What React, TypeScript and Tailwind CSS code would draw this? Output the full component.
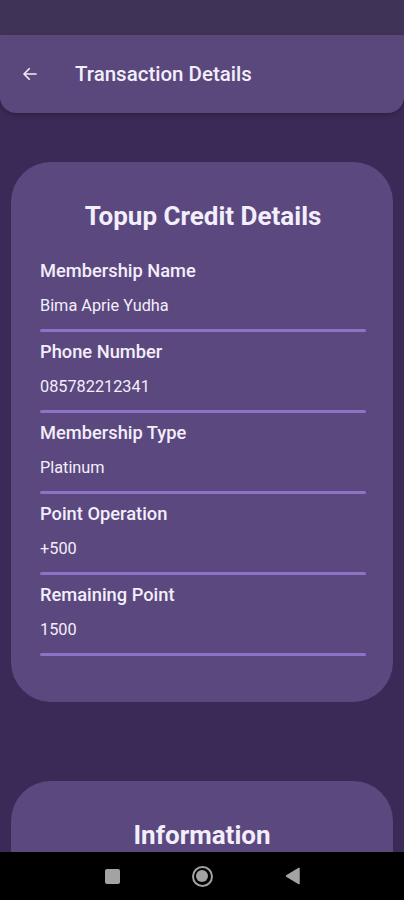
const fields = [
  { label: "Membership Name", value: "Bima Aprie Yudha" },
  { label: "Phone Number", value: "085782212341" },
  { label: "Membership Type", value: "Platinum" },
  { label: "Point Operation", value: "+500" },
  { label: "Remaining Point", value: "1500" },
];

export default function App() {
  return (
    <div
      className="relative flex h-[900px] w-[404px] flex-col overflow-hidden bg-[#3b2a57] text-[#f3eefb]"
      style={{ fontFamily: "Roboto, 'Noto Sans', sans-serif" }}
    >
      {/* status bar */}
      <div className="h-[35px] shrink-0 bg-[#3f3458]" />

      {/* app bar */}
      <header className="flex h-[78px] shrink-0 items-center rounded-b-[16px] bg-[#5a477c] shadow-[0_2px_4px_rgba(0,0,0,0.25)]">
        <svg
          className="ml-[21px] h-[18px] w-[18px]"
          viewBox="0 0 24 24"
          fill="none"
          stroke="currentColor"
          strokeWidth="2.2"
          strokeLinecap="round"
          strokeLinejoin="round"
        >
          <path d="M20 12H5" />
          <path d="M11 5l-7 7 7 7" />
        </svg>
        <h1 className="ml-[36px] text-[20.5px] font-medium leading-[26px]">Transaction Details</h1>
      </header>

      <main className="flex flex-col px-[11px] pt-[49px]">
        <section className="flex flex-col rounded-[40px] bg-[#5b487e] pb-[46px] pl-[29px] pr-[27px] pt-[38px]">
          <h2 className="text-center text-[26px] font-bold leading-[32px]">Topup Credit Details</h2>
          <div className="mt-[27px] flex flex-col gap-[8px]">
            {fields.map((f) => (
              <div key={f.label} className="flex flex-col">
                <div className="text-[18.3px] font-medium leading-[24px]">{f.label}</div>
                <div className="mt-[12px] text-[16.3px] leading-[22px]">{f.value}</div>
                <div className="mt-[12px] h-[3px] rounded-full bg-[#8d72c8]" />
              </div>
            ))}
          </div>
        </section>

        <section className="mt-[79px] flex h-[120px] flex-col rounded-[40px] bg-[#5b487e] pt-[38px]">
          <h2 className="text-center text-[26px] font-bold leading-[32px]">Information</h2>
        </section>
      </main>

      {/* navigation bar */}
      <nav className="absolute bottom-0 left-0 flex h-[48px] w-full items-center justify-center gap-[72px] bg-black">
        <div className="h-[15px] w-[15px] rounded-[2px] bg-[#a3a3a3]" />
        <div className="h-[21px] w-[21px] rounded-full border-[2.5px] border-[#a3a3a3] p-[2.5px]">
          <div className="h-full w-full rounded-full bg-[#a3a3a3]" />
        </div>
        <svg className="h-[18px] w-[15px]" viewBox="0 0 15 18">
          <path d="M14 1.5v15L1.5 9z" fill="#a3a3a3" stroke="#a3a3a3" strokeLinejoin="round" strokeWidth="1.5" />
        </svg>
      </nav>
    </div>
  );
}
